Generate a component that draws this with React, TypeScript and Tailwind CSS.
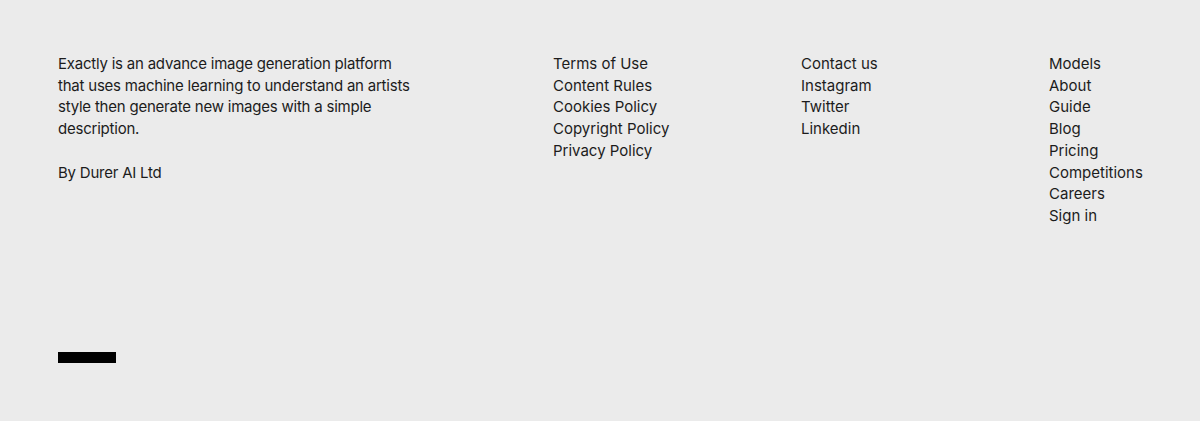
import React from "react";

const col2 = ["Terms of Use", "Content Rules", "Cookies Policy", "Copyright Policy", "Privacy Policy"];
const col3 = ["Contact us", "Instagram", "Twitter", "Linkedin"];
const col4 = ["Models", "About", "Guide", "Blog", "Pricing", "Competitions", "Careers", "Sign in"];

function LinkCol({ items }: { items: string[] }) {
  return (
    <ul className="flex flex-col">
      {items.map((t) => (
        <li key={t}>
          <a href="#" className="text-[#1c1c1c]">{t}</a>
        </li>
      ))}
    </ul>
  );
}

export default function App() {
  return (
    <footer
      className="bg-[#ebebeb] min-h-[421px] flex flex-col px-[58px] pt-[53px] pb-[58px] text-[15px] leading-[21.7px] text-[#1c1c1c]"
      style={{ fontFamily: "Inter, 'Noto Sans', sans-serif" }}
    >
      <div className="grid grid-cols-[495px_248px_248px_1fr]">
        <div className="w-[357px] tracking-[-0.22px]">
          <p>
            Exactly is an advance image generation platform that uses machine learning to understand an artists style then generate new images with a simple description.
          </p>
          <p className="mt-[21.7px]">By Durer AI Ltd</p>
        </div>
        <LinkCol items={col2} />
        <LinkCol items={col3} />
        <LinkCol items={col4} />
      </div>
      <div className="mt-auto w-[58px] h-[11px] bg-black" />
    </footer>
  );
}
